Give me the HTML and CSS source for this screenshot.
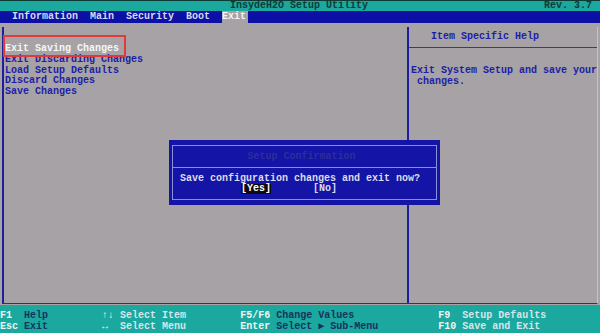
FILE: index.html
```html
<!DOCTYPE html>
<html lang="en">
<head>
  <meta charset="UTF-8" />
  <meta name="viewport" content="width=device-width, initial-scale=1.0"/>
  <title>InsydeH2O Setup Utility</title>
  <link rel="stylesheet" href="styles.css">
</head>
<body>
  <div class="screen">
    <header class="titlebar">
      <span class="title">InsydeH2O Setup Utility</span>
      <span class="rev">Rev. 3.7</span>
    </header>

    <nav class="menubar">
      <span class="tab">Information</span>
      <span class="tab">Main</span>
      <span class="tab">Security</span>
      <span class="tab">Boot</span>
      <span class="tab active">Exit</span>
    </nav>

    <main class="content">
      <section class="frame">
        <div class="items">
          <div class="item selected">Exit Saving Changes</div>
          <div class="item">Exit Discarding Changes</div>
          <div class="item">Load Setup Defaults</div>
          <div class="item">Discard Changes</div>
          <div class="item">Save Changes</div>
        </div>
        <aside class="help">
          <div class="help-title">Item Specific Help</div>
          <div class="help-text">Exit System Setup and save your<br><span class="indent">changes.</span></div>
        </aside>
      </section>

      <!-- confirmation popup sits over the panels -->
      <div class="dialog">
        <div class="dialog-inner">
          <div class="dialog-title">Setup Confirmation</div>
          <div class="dialog-body">
            <div>Save configuration changes and exit now?</div>
            <div class="choices"><span class="choice on">[Yes]</span><span class="choice">[No]</span></div>
          </div>
        </div>
      </div>
    </main>

    <footer class="keys">
      <div class="key-row"><span class="k">F1</span>  <span class="d">Help</span>         <span class="k">↑↓</span> <span class="l">Select Item</span>         <span class="k">F5/F6</span> <span class="d">Change Values</span>              <span class="k">F9</span>  <span class="l">Setup Defaults</span></div>
      <div class="key-row"><span class="k">Esc</span> <span class="d">Exit</span>         <span class="k">↔</span>  <span class="l">Select Menu</span>         <span class="k">Enter</span> <span class="d">Select ► Sub-Menu</span>          <span class="k">F10</span> <span class="l">Save and Exit</span></div>
    </footer>
  </div>
</body>
</html>
```

FILE: styles.css
```css
body {
  margin: 0;
  background-color: #a7a2a6;
  font-family: "Liberation Mono", "DejaVu Sans Mono", monospace;
  font-size: 10px;
  font-weight: bold;
}

.screen {
  width: 600px;
  height: 333px;
  display: flex;
  flex-direction: column;
  overflow: hidden;
}

.titlebar {
  height: 10px;
  border-top: 1px solid #0d3a34;
  background-color: #1ba89e;
  color: #0c3b3a;
  display: flex;
  align-items: center;
  line-height: 10px;
}

.title {
  margin-left: 230px;
}

.rev {
  margin-left: auto;
  margin-right: 8px;
}

.menubar {
  height: 12px;
  background-color: #0c10a4;
  color: #d4d8ee;
  display: flex;
  align-items: center;
  gap: 12px;
  padding-left: 12px;
  line-height: 12px;
}

.tab.active {
  background-color: #a7a2a6;
  color: #f4f4f4;
  padding-right: 2px;
}

.content {
  height: 282px;
  padding: 4px 2px 1px 2px;
  box-sizing: border-box;
  position: relative;
}

.frame {
  height: 100%;
  display: flex;
  border-left: 2px solid #1d1f9c;
  border-bottom: 1px solid #2a2c9c;
  border-right: 1px solid #c6c2c6;
  box-sizing: border-box;
}

.items {
  width: 402px;
  padding: 17px 0 0 1px;
  color: #1c1ea6;
}

.item {
  line-height: 10.8px;
}

.item.selected {
  color: #f6f6f6;
  position: relative;
}

.item.selected::before {
  content: "";
  position: absolute;
  left: -2px;
  top: -9px;
  width: 119px;
  height: 18px;
  border: 2px solid #e23a3a;
}

.help {
  flex: 1;
  border-left: 2px solid #1d1f9c;
  color: #1c1ea6;
}

.help-title {
  height: 20px;
  line-height: 20px;
  padding-left: 22px;
  border-bottom: 1px solid #3436a6;
}

.help-text {
  padding: 17px 0 0 2px;
  line-height: 11px;
  white-space: nowrap;
}

.indent {
  padding-left: 6px;
}

.dialog {
  position: absolute;
  left: 169px;
  top: 117px;
  width: 271px;
  height: 65px;
  background-color: #1414a6;
  padding: 5px 3px;
  box-sizing: border-box;
}

.dialog-inner {
  height: 100%;
  border: 1px solid #8c8ed8;
  box-sizing: border-box;
}

.dialog-title {
  height: 21px;
  line-height: 21px;
  text-align: center;
  color: #2c2e9c;
  border-bottom: 1px solid #8c8ed8;
  padding-right: 6px;
}

.dialog-body {
  padding: 6px 0 0 7px;
  color: #dcdcec;
  line-height: 10px;
}

.choices {
  padding-left: 61px;
  display: flex;
  gap: 42px;
}

.choice.on {
  background-color: #0a0a10;
  color: #ffffff;
}

.keys {
  flex: 1;
  background-color: #1ba89e;
  padding-top: 6px;
  box-sizing: border-box;
}

.key-row {
  white-space: pre;
  line-height: 10.5px;
}

.k {
  color: #eef6f4;
}

.d {
  color: #17325e;
}

.l {
  color: #d6e6ea;
}
```
